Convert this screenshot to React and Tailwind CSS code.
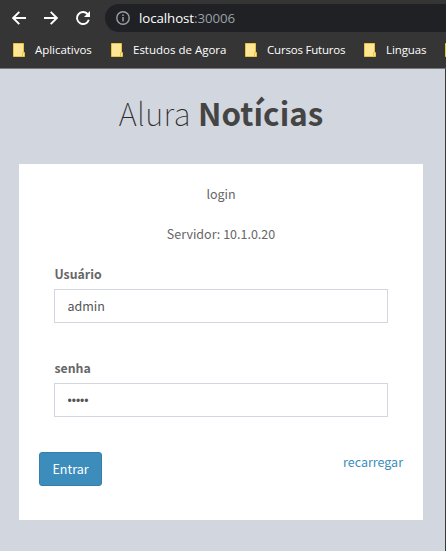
const bookmarks = [
  { name: 'Aplicativos', width: 'w-[98px]', spacing: 'tracking-[-0.04px]' },
  { name: 'Estudos de Agora', width: 'w-[134px]', spacing: 'tracking-[0px]' },
  { name: 'Cursos Futuros', width: 'w-[119px]', spacing: 'tracking-[-0.2px]' },
  { name: 'Linguas', width: 'w-[81px]', spacing: 'tracking-[-0.1px]' },
  { name: '', width: 'w-[14px]', spacing: '' },
];

function Folder() {
  return (
    <svg width="12" height="14" viewBox="0 0 12 14" className="mr-[10px] shrink-0">
      <path d="M.5.5h10v9h1v4H.5z" fill="#ffe694" stroke="#e9c33f" />
      <path d="M9.5 9.5v4" fill="none" stroke="#e9c33f" />
    </svg>
  );
}

function Toolbar() {
  return (
    <div className="flex h-9 items-center pl-3 text-white">
      <svg width="14" height="14" viewBox="0 0 14 14" className="mr-[18px] shrink-0" fill="none" stroke="currentColor" strokeWidth="1.9">
        <path d="M14 7H1.4M7.3.8 1.2 7l6.1 6.2" />
      </svg>
      <svg width="14" height="14" viewBox="0 0 14 14" className="mr-[18px] shrink-0" fill="none" stroke="currentColor" strokeWidth="1.9">
        <path d="M0 7h12.6M6.7.8 12.8 7l-6.1 6.2" />
      </svg>
      <svg width="14" height="14" viewBox="0 0 14 14" className="mr-[15px] shrink-0" fill="none" stroke="currentColor" strokeWidth="1.9">
        <path d="M12.8 8.8A6 6 0 1 1 11.5 3l1.3 1.4" />
        <path d="M14 0v6H8z" fill="currentColor" stroke="none" />
      </svg>
      <div className="flex h-7 grow items-center rounded-l-full bg-[#202124] pl-[11px]">
        <svg width="14" height="14" viewBox="0 0 14 14" className="mr-[9px] shrink-0" fill="none" stroke="#9aa0a6" strokeWidth="1.4">
          <circle cx="7" cy="7" r="6.2" />
          <path d="M7 6v4.5M7 3.4v1.5" strokeWidth="1.5" />
        </svg>
        <span className="font-['Open_Sans','Noto_Sans',sans-serif] text-[13.3px] leading-5 tracking-[-0.08px]">
          localhost<span className="text-[#9aa0a6]">:30006</span>
        </span>
      </div>
    </div>
  );
}

function Field({ label, type, value, font }) {
  return (
    <label className="block">
      <span className="block h-5 pl-[0.5px] text-[12.3px] leading-5 font-bold">{label}</span>
      <input
        type={type}
        defaultValue={value}
        className={`mt-[5px] block h-[34px] w-full border border-[#d2d6de] bg-white px-[12.5px] text-[#555] outline-none ${font}`}
      />
    </label>
  );
}

export default function App() {
  return (
    <div className="flex h-[551px] w-[446px] flex-col overflow-hidden bg-[#353535]">
      <Toolbar />
      <div className="flex h-8 items-center overflow-hidden pb-[5px] pl-[13px] font-['Open_Sans','Noto_Sans',sans-serif] text-[11.5px] text-white">
        {bookmarks.map((b) => (
          <div key={b.name} className={`flex shrink-0 items-center whitespace-nowrap ${b.width} ${b.spacing}`}>
            <Folder />
            {b.name}
          </div>
        ))}
      </div>
      <main className="grow border-t border-r border-t-[#77787b] border-r-[#353b3b] bg-[#d2d6de] pr-[22px] pl-[19px] font-['Noto_Sans_CJK_SC',sans-serif] text-[12.5px] leading-5 text-[#666]">
        <h1 className="pt-[19px] text-center text-[31.3px] leading-[49px] font-thin tracking-[0.3px] whitespace-nowrap text-[#2a2a2a]">
          Alura <b className="font-bold tracking-[0.05px] text-[#444]">Notícias</b>
        </h1>
        <form className="mt-[27px] h-[356px] bg-white px-5 pt-5">
          <p className="text-center">login</p>
          <p className="mt-5 text-center">Servidor: 10.1.0.20</p>
          <div className="mt-5 flex flex-col gap-[35px] px-[15px]">
            <Field label="Usuário" type="text" value="admin" font="pb-0.5" />
            <Field label="senha" type="password" value="admin" font="pt-0.5 font-['Liberation_Sans',sans-serif] text-[12px]" />
          </div>
          <div className="mt-[35px] flex items-start justify-between">
            <button type="button" className="h-[34px] w-[63px] rounded-[3px] border border-[#367fa9] bg-[#3c8dbc] text-white">
              Entrar
            </button>
            <a className="text-[#3c8dbc]">recarregar</a>
          </div>
        </form>
      </main>
    </div>
  );
}
